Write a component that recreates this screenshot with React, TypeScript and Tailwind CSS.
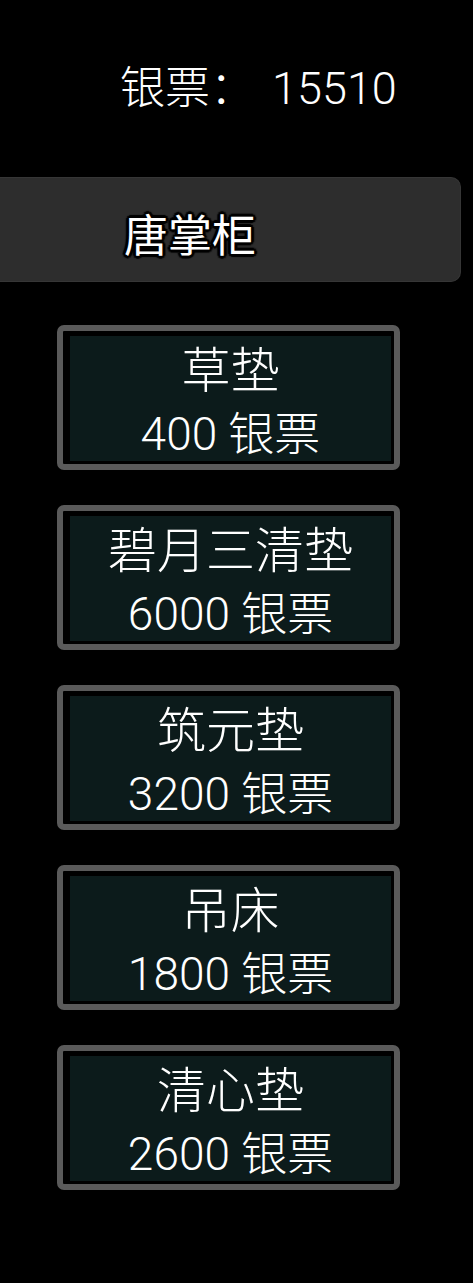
const font = { fontFamily: 'Roboto, "Noto Sans CJK SC", sans-serif' };

const items = [
  { name: "草垫", price: 400 },
  { name: "碧月三清垫", price: 6000 },
  { name: "筑元垫", price: 3200 },
  { name: "吊床", price: 1800 },
  { name: "清心垫", price: 2600 },
];

function ShopItem({ name, price }: { name: string; price: number }) {
  return (
    <div className="ml-[57px] w-[343px] h-[145px] rounded-[7px] border-[6px] border-[#5a5a5a] bg-black pt-[5px] pl-[7px] pr-[3px] pb-[3px]">
      <div className="h-full bg-[#0c1b1b] flex flex-col items-center justify-center pt-[8px] text-white font-light">
        <div className="text-[49px] leading-[62px]">{name}</div>
        <div className="text-[46px] leading-[62px]">{price} 银票</div>
      </div>
    </div>
  );
}

export default function App() {
  return (
    <div className="w-[473px] h-[1283px] bg-black overflow-hidden" style={font}>
      <div className="pt-[66px] pl-[120px] text-[45px] leading-[46px] text-white font-light whitespace-nowrap">
        银票：<span className="ml-[17px]">15510</span>
      </div>
      <div className="mt-[65px] w-[461px] h-[105px] rounded-r-[10px] bg-[#2d2d2d] border border-l-0 border-[#363636] flex items-center pl-[124px] pt-[14px]">
        <span className="text-[44px] leading-[44px] text-white [text-shadow:0_0_3px_#000,2px_2px_1px_#000,-2px_-2px_1px_#000,2px_-2px_1px_#000,-2px_2px_1px_#000,3px_0_1px_#000,-3px_0_1px_#000,0_3px_1px_#000,0_-3px_1px_#000]">
          唐掌柜
        </span>
      </div>
      <div className="mt-[43px] flex flex-col gap-[35px]">
        {items.map((it) => (
          <ShopItem key={it.name} name={it.name} price={it.price} />
        ))}
      </div>
    </div>
  );
}
